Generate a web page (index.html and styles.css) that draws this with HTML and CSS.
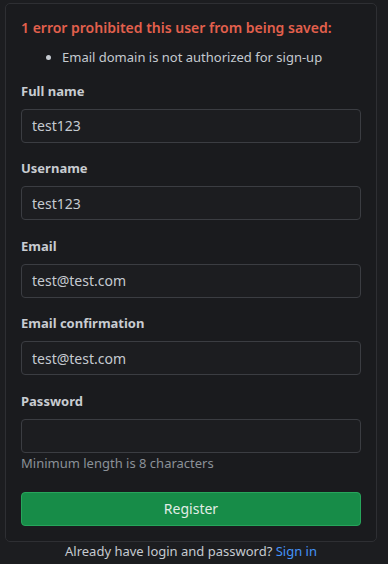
FILE: index.html
```html
<!DOCTYPE html>
<html lang="en">
<head>
    <meta charset="UTF-8">
    <meta name="viewport" content="width=device-width, initial-scale=1.0">
    <title>Sign up</title>
    <link rel="stylesheet" href="styles.css">
</head>
<body>
    <main class="signup">
        <form class="card" onsubmit="return false">
            <div class="errors">
                <h2>1 error prohibited this user from being saved:</h2>
                <ul>
                    <li>Email domain is not authorized for sign-up</li>
                </ul>
            </div>

            <div class="field">
                <label for="full-name">Full name</label>
                <input id="full-name" type="text" value="test123">
            </div>

            <div class="field">
                <label for="username">Username</label>
                <input id="username" type="text" value="test123">
            </div>

            <div class="field">
                <label for="email">Email</label>
                <input id="email" type="email" value="test@test.com">
            </div>

            <div class="field">
                <label for="email-confirm">Email confirmation</label>
                <input id="email-confirm" type="email" value="test@test.com">
            </div>

            <div class="field">
                <label for="password">Password</label>
                <input id="password" type="password">
                <p class="hint">Minimum length is 8 characters</p>
            </div>

            <button type="submit">Register</button>
        </form>
        <p class="signin">Already have login and password? <a href="#">Sign in</a></p>
    </main>
</body>
</html>
```

FILE: styles.css
```css
* {
    box-sizing: border-box;
    margin: 0;
    padding: 0;
}

body {
    font-family: 'Noto Sans', 'Open Sans', sans-serif;
    background-color: #1c1d20;
    color: #c5cad0;
    font-size: 13px;
}

.signup {
    padding: 3px 11px 0 5px;
}

.card {
    background-color: #1a1b1e;
    border: 1px solid #2e2f33;
    border-radius: 5px;
    padding: 14px 15px 15px 15px;
}

.errors {
    margin-bottom: -1px;
}

.errors h2 {
    color: #e3604d;
    font-size: 14px;
    font-weight: 600;
    line-height: 20px;
}

.errors ul {
    margin: 10px 0 0 41px;
    line-height: 18px;
}

.field {
    margin-top: 16.5px;
}

.field label {
    display: block;
    font-weight: 700;
    color: #c8ccd1;
    line-height: 18px;
    margin-bottom: 9px;
}

.field input {
    display: block;
    width: 100%;
    height: 34px;
    padding: 0 10px;
    background-color: #1c1d20;
    border: 1px solid #3b3d42;
    border-radius: 4px;
    color: #c5cad0;
    font-family: inherit;
    font-size: 14px;
}

.hint {
    color: #8b9198;
    line-height: 18px;
    margin-top: 1px;
}

.card button {
    display: block;
    width: 100%;
    height: 34px;
    margin-top: 20px;
    background-color: #178c48;
    border: 1px solid #27a55b;
    border-radius: 4px;
    color: #e2ede6;
    font-family: inherit;
    font-size: 14px;
    cursor: pointer;
}

.signin {
    text-align: center;
    line-height: 18px;
    color: #c5cad0;
}

.signin a {
    color: #4493f8;
    text-decoration: none;
}
```
